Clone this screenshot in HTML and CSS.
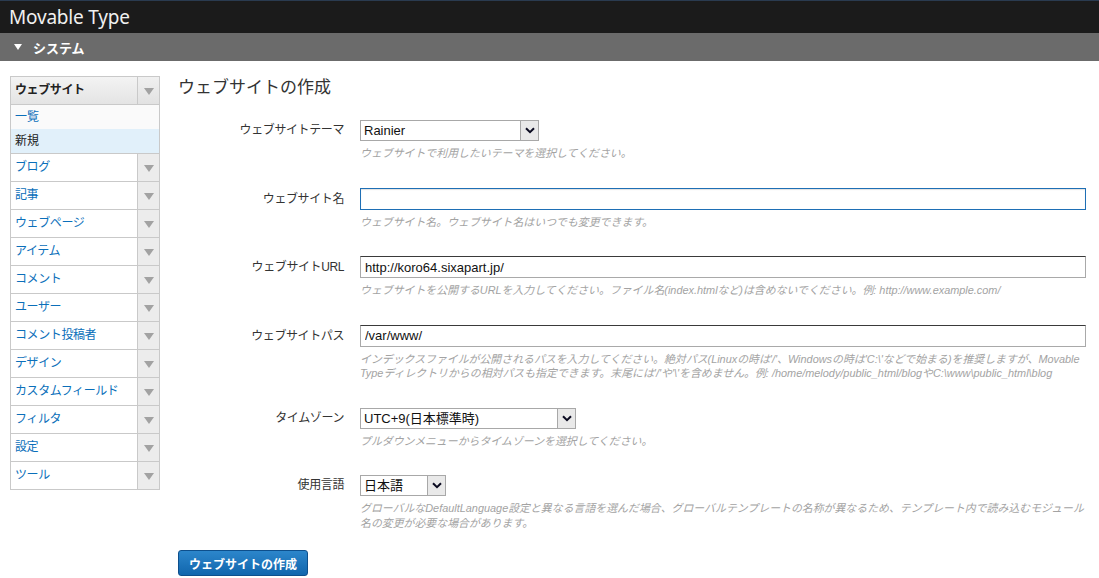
FILE: index.html
```html
<!DOCTYPE html>
<html lang="ja">
<head>
<meta charset="utf-8">
<title>ウェブサイトの作成 | Movable Type</title>
<link rel="stylesheet" href="styles.css">
</head>
<body>
<header class="topbar"><div class="brand">Movable Type</div></header>
<div class="scopebar"><span class="scope-tri"></span><span>システム</span></div>

<div class="layout">
  <nav class="sidebar">
    <div class="nav-row nav-head">
      <span class="nav-label">ウェブサイト</span>
      <span class="nav-toggle"><i class="caret"></i></span>
    </div>
    <ul class="sub">
      <li class="sub-item"><a href="#">一覧</a></li>
      <li class="sub-item current">新規</li>
    </ul>
    <div class="nav-row"><a class="nav-label" href="#">ブログ</a><span class="nav-toggle"><i class="caret"></i></span></div>
    <div class="nav-row"><a class="nav-label" href="#">記事</a><span class="nav-toggle"><i class="caret"></i></span></div>
    <div class="nav-row"><a class="nav-label" href="#">ウェブページ</a><span class="nav-toggle"><i class="caret"></i></span></div>
    <div class="nav-row"><a class="nav-label" href="#">アイテム</a><span class="nav-toggle"><i class="caret"></i></span></div>
    <div class="nav-row"><a class="nav-label" href="#">コメント</a><span class="nav-toggle"><i class="caret"></i></span></div>
    <div class="nav-row"><a class="nav-label" href="#">ユーザー</a><span class="nav-toggle"><i class="caret"></i></span></div>
    <div class="nav-row"><a class="nav-label" href="#">コメント投稿者</a><span class="nav-toggle"><i class="caret"></i></span></div>
    <div class="nav-row"><a class="nav-label" href="#">デザイン</a><span class="nav-toggle"><i class="caret"></i></span></div>
    <div class="nav-row"><a class="nav-label" href="#">カスタムフィールド</a><span class="nav-toggle"><i class="caret"></i></span></div>
    <div class="nav-row"><a class="nav-label" href="#">フィルタ</a><span class="nav-toggle"><i class="caret"></i></span></div>
    <div class="nav-row"><a class="nav-label" href="#">設定</a><span class="nav-toggle"><i class="caret"></i></span></div>
    <div class="nav-row last"><a class="nav-label" href="#">ツール</a><span class="nav-toggle"><i class="caret"></i></span></div>
  </nav>

  <main class="content">
    <h1 class="page-title">ウェブサイトの作成</h1>
    <form class="form">
      <div class="field">
        <label class="field-label lh21">ウェブサイトテーマ</label>
        <div class="field-ctrl">
          <span class="select-wrap w-theme">
            <select class="select"><option>Rainier</option></select>
            <span class="select-btn"><svg width="10" height="7" viewBox="0 0 10 7"><path d="M1 1.2 L5 5.2 L9 1.2" fill="none" stroke="#0a0a20" stroke-width="2"/></svg></span>
          </span>
          <p class="hint">ウェブサイトで利用したいテーマを選択してください。</p>
        </div>
      </div>

      <div class="field">
        <label class="field-label lh22">ウェブサイト名</label>
        <div class="field-ctrl">
          <input class="text focus" type="text" value="">
          <p class="hint">ウェブサイト名。ウェブサイト名はいつでも変更できます。</p>
        </div>
      </div>

      <div class="field">
        <label class="field-label lh22">ウェブサイトURL</label>
        <div class="field-ctrl">
          <input class="text" type="text" value="http://koro64.sixapart.jp/">
          <p class="hint">ウェブサイトを公開するURLを入力してください。ファイル名(index.htmlなど)は含めないでください。例: http://www.example.com/</p>
        </div>
      </div>

      <div class="field">
        <label class="field-label lh22">ウェブサイトパス</label>
        <div class="field-ctrl">
          <input class="text" type="text" value="/var/www/">
          <p class="hint">インデックスファイルが公開されるパスを入力してください。絶対パス(Linuxの時は'/'、Windowsの時は'C:\'などで始まる)を推奨しますが、Movable Typeディレクトリからの相対パスも指定できます。末尾には'/'や'\'を含めません。例: /home/melody/public_html/blogやC:\www\public_html\blog</p>
        </div>
      </div>

      <div class="field">
        <label class="field-label lh21">タイムゾーン</label>
        <div class="field-ctrl">
          <span class="select-wrap w-tz">
            <select class="select"><option>UTC+9(日本標準時)</option></select>
            <span class="select-btn"><svg width="10" height="7" viewBox="0 0 10 7"><path d="M1 1.2 L5 5.2 L9 1.2" fill="none" stroke="#0a0a20" stroke-width="2"/></svg></span>
          </span>
          <p class="hint">プルダウンメニューからタイムゾーンを選択してください。</p>
        </div>
      </div>

      <div class="field">
        <label class="field-label lh21">使用言語</label>
        <div class="field-ctrl">
          <span class="select-wrap w-lang">
            <select class="select"><option>日本語</option></select>
            <span class="select-btn"><svg width="10" height="7" viewBox="0 0 10 7"><path d="M1 1.2 L5 5.2 L9 1.2" fill="none" stroke="#0a0a20" stroke-width="2"/></svg></span>
          </span>
          <p class="hint">グローバルなDefaultLanguage設定と異なる言語を選んだ場合、グローバルテンプレートの名称が異なるため、テンプレート内で読み込むモジュール名の変更が必要な場合があります。</p>
        </div>
      </div>
    </form>
    <div class="actions">
      <button class="btn-primary" type="button">ウェブサイトの作成</button>
    </div>
  </main>
</div>
</body>
</html>
```

FILE: styles.css
```css
* { box-sizing: border-box; }

body {
  margin: 0;
  background: #fff;
  color: #333;
  font-family: "Liberation Sans", "Noto Sans CJK JP", sans-serif;
  font-size: 12px;
}

.topbar {
  height: 33px;
  background: #1b1b1b;
  border-top: 1px solid #2a3b50;
  display: flex;
  align-items: center;
  padding-left: 9px;
}

.brand {
  font-family: "Noto Sans", "Open Sans", sans-serif;
  font-size: 19px;
  color: #f0f0f0;
  letter-spacing: -0.2px;
}

.scopebar {
  height: 28px;
  background: #6b6b6b;
  color: #fff;
  display: flex;
  align-items: center;
  gap: 11px;
  padding-left: 14px;
  font-size: 13px;
  font-weight: bold;
}

.scope-tri {
  width: 0;
  height: 0;
  border-left: 4px solid transparent;
  border-right: 4px solid transparent;
  border-top: 6px solid #fff;
}

.layout {
  display: flex;
  align-items: flex-start;
  gap: 18px;
  padding: 15px 13px 0 10px;
}

/* sidebar */
.sidebar {
  width: 150px;
  flex: none;
  border: 1px solid #c9c9c9;
  border-bottom: none;
}

.nav-row {
  display: flex;
  height: 28px;
  border-bottom: 1px solid #c9c9c9;
  background: #fff;
}

.nav-label {
  flex: 1;
  padding-left: 4px;
  line-height: 27px;
  color: #0b6fba;
  text-decoration: none;
  white-space: nowrap;
  letter-spacing: -0.4px;
}

.nav-toggle {
  width: 22px;
  flex: none;
  border-left: 1px solid #c9c9c9;
  background: #ececec;
  display: flex;
  align-items: center;
  justify-content: center;
}

.caret {
  display: block;
  width: 0;
  height: 0;
  border-left: 5px solid transparent;
  border-right: 5px solid transparent;
  border-top: 7px solid #a2a2a2;
  margin-top: 1px;
}

.nav-head {
  background: linear-gradient(#f3f3f3, #e4e4e4);
}

.nav-head .nav-label {
  color: #222;
  font-weight: bold;
}

.nav-head .nav-toggle {
  background: linear-gradient(#f0f0f0, #e2e2e2);
}

.sub {
  list-style: none;
  margin: 0;
  padding: 0;
  border-bottom: 1px solid #c9c9c9;
}

.sub-item {
  height: 24px;
  line-height: 24px;
  padding-left: 4px;
  background: #fafafa;
}

.sub-item a {
  color: #0b6fba;
  text-decoration: none;
}

.sub-item.current {
  background: #e1f0fa;
  color: #222;
}

/* content */
.content {
  flex: 1;
  min-width: 0;
}

.page-title {
  margin: 0;
  font-size: 17px;
  font-weight: normal;
  line-height: 24px;
  color: #333;
}

.form {
  margin-top: 20px;
  display: flex;
  flex-direction: column;
  gap: 27px;
}

.field {
  display: grid;
  grid-template-columns: 166px 1fr;
  column-gap: 16px;
}

.field-label {
  text-align: right;
  font-size: 12px;
  color: #333;
  white-space: nowrap;
  letter-spacing: -0.4px;
}

.lh21 { line-height: 21px; }
.lh22 { line-height: 22px; }

.hint {
  margin: 5px 0 0;
  font-size: 10.9px;
  line-height: 14.5px;
  color: #a3a3a3;
  font-style: italic;
}

.text {
  display: block;
  width: 100%;
  height: 22px;
  margin: 0;
  padding: 0 4px;
  border: 1px solid #a9a9a9;
  border-top-color: #3a3a3a;
  font-family: "Liberation Sans", "Noto Sans CJK JP", sans-serif;
  font-size: 13px;
  color: #111;
  background: #fff;
  outline: none;
}

.text.focus {
  border: 1px solid #1e6fb5;
  box-shadow: inset 0 1px 1px rgba(0, 0, 0, 0.12);
}

.select-wrap {
  position: relative;
  display: block;
  height: 21px;
}

.w-theme { width: 179px; }
.w-tz { width: 216px; }
.w-lang { width: 86px; }

.select {
  -webkit-appearance: none;
  appearance: none;
  width: 100%;
  height: 21px;
  margin: 0;
  padding: 0 22px 0 3px;
  border: 1px solid #a8a8a8;
  border-radius: 0;
  background: #fff;
  font-family: "Liberation Sans", "Noto Sans CJK JP", sans-serif;
  font-size: 13px;
  color: #111;
  outline: none;
}

.select-btn {
  position: absolute;
  top: 1px;
  right: 1px;
  bottom: 1px;
  width: 18px;
  background: #e9e9e9;
  border-left: 1px solid #a8a8a8;
  display: flex;
  align-items: center;
  justify-content: center;
  pointer-events: none;
}

.actions {
  margin-top: 20px;
}

.btn-primary {
  height: 26px;
  padding: 0 10px;
  border: 1px solid #0d4f8c;
  border-radius: 3px;
  background: linear-gradient(#2c86cb, #1166ad);
  color: #fff;
  font-family: "Liberation Sans", "Noto Sans CJK JP", sans-serif;
  font-size: 12px;
  font-weight: bold;
  cursor: pointer;
}
```
